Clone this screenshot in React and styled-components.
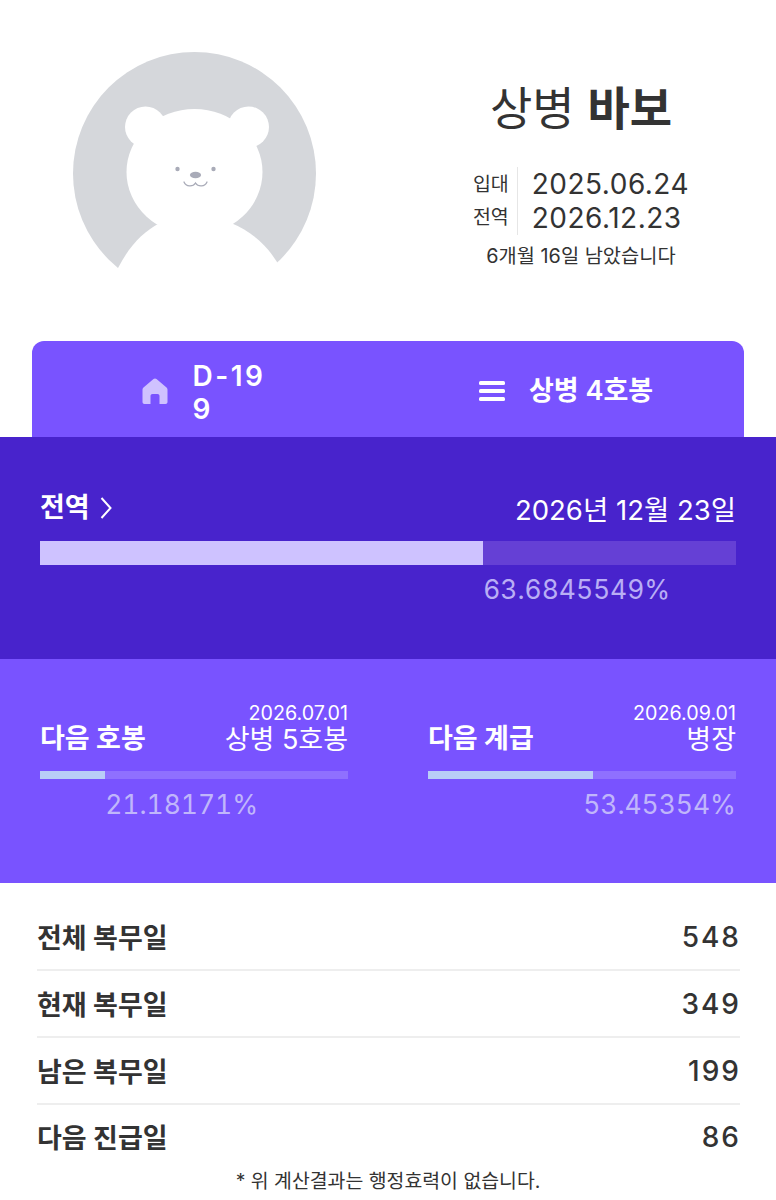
import React from "react";
import styled, { createGlobalStyle } from "styled-components";

const Global = createGlobalStyle`
  html, body { margin: 0; padding: 0; background: #fff; }
  body { font-family: Inter, "Noto Sans CJK KR", sans-serif; color: #333; }
  * { box-sizing: border-box; }
`;
const Page = styled.div`width: 776px; height: 1200px; overflow: hidden; background: #fff;`;
const Header = styled.header`display: flex; height: 341px; padding: 52px 0 0 73px;`;
const Avatar = styled.svg`display: block; width: 243px; height: 243px; flex: none;`;
const Info = styled.div`flex: 1; display: flex; flex-direction: column; align-items: center; padding: 0 0 0 70px;`;
const Name = styled.h1`margin: 28px 0 0; font-size: 46px; line-height: 56px; font-weight: 400; color: #333; letter-spacing: 0;
  b { font-weight: 700; }`;
const Dates = styled.div`display: flex; margin-top: 31px; height: 68px;`;
const Labels = styled.div`display: flex; flex-direction: column; justify-content: space-between; padding: 1px 8px 1px 0; font-size: 19.5px; line-height: 33px; border-right: 1px solid #e6e6e6; color: #333;`;
const Values = styled.div`display: flex; flex-direction: column; justify-content: space-between; padding: 0 0 0 14px; font-size: 28px; line-height: 34px; letter-spacing: 0.5px; color: #333;`;
const Remain = styled.div`margin-top: 9px; font-size: 19.8px; line-height: 24px; color: #333;`;
const Tabs = styled.nav`display: grid; grid-template-columns: 1fr 1fr; height: 96px; margin: 0 32px; padding-top: 3px; background: #7953ff; border-radius: 12px 12px 0 0;`;
const Tab = styled.div`display: flex; align-items: center; justify-content: center; gap: 24px; color: #fff; font-size: 27px; font-weight: 600; line-height: 33px;`;
const HomeTab = styled(Tab)`gap: 25px; padding-right: 2px;`;
const DDay = styled.span`width: 84px; padding-top: 4px; word-break: break-all; font-size: 28px; letter-spacing: 2.5px;`;
const Rank = styled.span`white-space: nowrap;`;
const Service = styled.section`height: 222px; padding: 53px 40px 0; background: #4823cc; color: #fff;`;
const HeadRow = styled.div`display: flex; justify-content: space-between; align-items: center; height: 36px;`;
const ServiceLabel = styled.span`display: flex; align-items: center; gap: 10px; font-size: 27px; font-weight: 700; line-height: 34px;`;
const ServiceDate = styled.span`font-size: 27.5px; font-weight: 400;`;
const Track = styled.div`margin-top: ${p => p.$top}px; height: ${p => p.$h}px; background: ${p => p.$bg};`;
const Fill = styled.div`height: 100%; background: ${p => p.$bg};`;
const PctRow = styled.div`display: flex; margin-top: ${p => p.$top}px; font-size: 26.4px; line-height: 34px; color: ${p => p.$color}; font-variant-numeric: tabular-nums; font-feature-settings: "tnum" 1;`;
const Spacer = styled.div`flex: 0 1 auto; min-width: 0;`;
const PctText = styled.span`flex: none;`;
const Next = styled.section`display: grid; grid-template-columns: 308px 308px; justify-content: space-between; height: 224px; padding: 45px 40px 0; background: #7953ff; color: #fff;`;
const NextCol = styled.div`display: flex; flex-direction: column;`;
const NextHead = styled.div`display: flex; justify-content: space-between; align-items: flex-end; height: 52px;`;
const NextLabel = styled.span`font-size: 27px; font-weight: 700; line-height: 34px; `;
const NextRight = styled.div`display: flex; flex-direction: column; align-items: flex-end;`;
const NextDate = styled.span`font-size: 19.7px; line-height: 22px;`;
const NextTarget = styled.span`font-size: 27px; line-height: 32px; font-weight: 400; `;
const List = styled.section`padding: 21px 36px 0 37px;`;
const Row = styled.div`display: flex; justify-content: space-between; align-items: center; height: 67px; border-bottom: 2px solid #eeeeee;
  &:last-child { height: 63px; border-bottom: none; }`;
const RowLabel = styled.span`font-size: 27px; font-weight: 700; color: #333;`;
const RowValue = styled.span`font-size: 28px; font-weight: 450; letter-spacing: 2px; margin-right: -1px; color: #333;`;
const Note = styled.p`margin: 1px 0 0; text-align: center; font-size: 19.4px; line-height: 24px; color: #333;`;

const Bear = () => (
  <Avatar viewBox="73 52 243 243">
    <circle cx="194.5" cy="173.5" r="121.5" fill="#d5d7db" />
    <path d="M118 268 C130 245 143 232 160 223 L231 223 C250 231 265 243 277 262 L277 300 L118 300 Z" fill="#fff" />
    <circle cx="145.5" cy="127" r="20.5" fill="#fff" />
    <circle cx="248.5" cy="127" r="20.5" fill="#fff" />
    <ellipse cx="194.5" cy="172" rx="68" ry="63" fill="#fff" />
    <circle cx="177.5" cy="169" r="2.2" fill="#a9abb8" />
    <circle cx="213.5" cy="169" r="2.2" fill="#a9abb8" />
    <ellipse cx="195.5" cy="175" rx="5.6" ry="3.2" fill="#a9abb8" />
    <path d="M184 182 C186 187 193 187 195.5 183 C198 187 205 187 207 182" fill="none" stroke="#a9abb8" strokeWidth="1.3" strokeLinecap="round" />
  </Avatar>
);

const HomeIcon = () => (
  <svg width="26" height="26" viewBox="0 0 26 26" style={{ flex: "none" }}>
    <path d="M11.500 1 C12.300 .2 13.700 .2 14.500 1 L24.500 9.500 C25.300 10.200 25.500 11 25.500 12 V24 C25.500 25.200 24.700 26 23.500 26 H17.500 V18 C17.500 16.800 16.700 16 15.500 16 H10.500 C9.300 16 8.500 16.800 8.500 18 V26 H2.500 C1.300 26 .5 25.200 .5 24 V12 C.5 11 .7 10.200 1.500 9.500 Z" fill="#cfc2ff" />
  </svg>
);
const MenuIcon = () => (
  <svg width="26" height="22" viewBox="0 0 26 22" style={{ flex: "none" }}>
    <rect x="0" y="1" width="26" height="4" rx="1.500" fill="#fff" />
    <rect x="0" y="9" width="26" height="4" rx="1.500" fill="#fff" />
    <rect x="0" y="17" width="26" height="4" rx="1.500" fill="#fff" />
  </svg>
);
const Chevron = () => (
  <svg width="12" height="24" viewBox="0 0 12 24">
    <path d="M1.500 2 L10.500 12 L1.500 22" fill="none" stroke="#fff" strokeWidth="2" />
  </svg>
);

const Progress = ({ pct, top, h, trackBg, fillBg, pctTop, color }) => (
  <>
    <Track $top={top} $h={h} $bg={trackBg}>
      <Fill $bg={fillBg} style={{ width: `${pct}%` }} />
    </Track>
    <PctRow $top={pctTop} $color={color}>
      <Spacer style={{ flexBasis: `${pct}%` }} />
      <PctText>{pct}%</PctText>
    </PctRow>
  </>
);

const nextItems = [
  { label: "다음 호봉", date: "2026.07.01", target: "상병 5호봉", pct: "21.18171" },
  { label: "다음 계급", date: "2026.09.01", target: "병장", pct: "53.45354" },
];
const rows = [
  ["전체 복무일", "548"],
  ["현재 복무일", "349"],
  ["남은 복무일", "199"],
  ["다음 진급일", "86"],
];

export default function App() {
  return (
    <Page>
      <Global />
      <Header>
        <Bear />
        <Info>
          <Name>상병 <b>바보</b></Name>
          <Dates>
            <Labels><span>입대</span><span>전역</span></Labels>
            <Values><span>2025.06.24</span><span>2026.12.23</span></Values>
          </Dates>
          <Remain>6개월 16일 남았습니다</Remain>
        </Info>
      </Header>
      <Tabs>
        <HomeTab><HomeIcon /><DDay>D-199</DDay></HomeTab>
        <Tab><MenuIcon /><Rank>상병 4호봉</Rank></Tab>
      </Tabs>
      <Service>
        <HeadRow>
          <ServiceLabel>전역 <Chevron /></ServiceLabel>
          <ServiceDate>2026년 12월 23일</ServiceDate>
        </HeadRow>
        <Progress pct="63.6845549" top={15} h={24} trackBg="#6540d5" fillBg="#cec2ff" pctTop={7} color="#b9aef5" />
      </Service>
      <Next>
        {nextItems.map(item => (
          <NextCol key={item.label}>
            <NextHead>
              <NextLabel>{item.label}</NextLabel>
              <NextRight>
                <NextDate>{item.date}</NextDate>
                <NextTarget>{item.target}</NextTarget>
              </NextRight>
            </NextHead>
            <Progress pct={item.pct} top={15} h={8} trackBg="#8f70ff" fillBg="#b9cdf7" pctTop={8} color="#c0b6fb" />
          </NextCol>
        ))}
      </Next>
      <List>
        {rows.map(([label, value]) => (
          <Row key={label}>
            <RowLabel>{label}</RowLabel>
            <RowValue>{value}</RowValue>
          </Row>
        ))}
      </List>
      <Note>* 위 계산결과는 행정효력이 없습니다.</Note>
    </Page>
  );
}
